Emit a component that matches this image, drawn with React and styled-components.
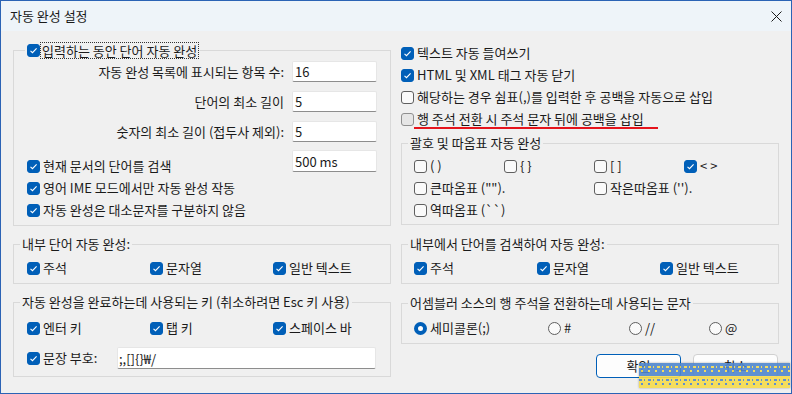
import styled, { createGlobalStyle } from "styled-components";

const GlobalStyle = createGlobalStyle`
  html, body {
    margin: 0;
    padding: 0;
    background: #f0f0f0;
  }
  body {
    font-family: "Noto Sans CJK KR", "Noto Sans", sans-serif;
    font-size: 13px;
    color: #1a1a1a;
  }
`;

const Window = styled.div`
  position: relative;
  width: 792px;
  height: 394px;
  box-sizing: border-box;
  border: 1px solid #2b63b5;
  background: #f0f0f0;
  overflow: hidden;
`;

const TitleBar = styled.div`
  height: 30px;
  background: #eef4f9;
  display: flex;
  align-items: center;
  justify-content: space-between;
  padding: 0 9px 0 9px;
  line-height: 16px;
`;

const Body = styled.div`
  display: grid;
  grid-template-columns: 378px 378px;
  column-gap: 10px;
  padding-left: 12px;
`;

const Column = styled.div`
  display: flex;
  flex-direction: column;
`;

const Group = styled.div`
  border: 1px solid #d9d9d9;
  margin-top: ${(p) => p.$top}px;
  padding: 0 ${(p) => p.$right ?? 0}px ${(p) => p.$bottom}px ${(p) => p.$left}px;
`;

const Caption = styled.div`
  width: fit-content;
  height: 16px;
  line-height: 16px;
  margin: -9px 0 0 ${(p) => p.$indent}px;
  padding: 0 2px;
  background: #f0f0f0;
  display: flex;
  align-items: center;
  white-space: nowrap;
`;

const FocusText = styled.span`
  margin-left: 1px;
  padding: 0 1px;
  height: 15px;
  line-height: 15px;
  outline: 1px dotted #333;
  outline-offset: 0;
`;

const FormGrid = styled.div`
  display: grid;
  grid-template-columns: 1fr 85px;
  grid-auto-rows: 21px;
  column-gap: 8px;
  row-gap: 9px;
  margin-top: 3px;
  align-items: center;
`;

const FieldLabel = styled.span`
  text-align: right;
  white-space: nowrap;
`;

const Field = styled.input`
  box-sizing: border-box;
  width: ${(p) => p.$width || 85}px;
  height: ${(p) => p.$height || 21}px;
  margin: 0;
  padding: 0 0 0 ${(p) => p.$pad ?? 2}px;
  border: 1px solid #e6e6e6;
  border-bottom-color: #8d8d8d;
  border-radius: 2px;
  background: #fff;
  font: inherit;
  color: #1a1a1a;
  outline: none;
`;

const SplitRow = styled.div`
  display: flex;
  justify-content: space-between;
  align-items: flex-start;
  margin-top: ${(p) => p.$top}px;
`;

const Stack = styled.div`
  display: flex;
  flex-direction: column;
  width: ${(p) => (p.$width ? `${p.$width}px` : "auto")};
  padding-top: ${(p) => p.$top || 0}px;
  margin-top: ${(p) => p.$mt || 0}px;
`;

const Check = styled.label`
  position: relative;
  display: flex;
  align-items: center;
  gap: 3px;
  height: 22px;
  line-height: 16px;
  white-space: nowrap;
  grid-column: ${(p) => p.$col || "auto"};
`;

const Box = styled.span`
  flex: none;
  box-sizing: border-box;
  width: 13px;
  height: 13px;
  border-radius: 3px;
  border: 1px solid ${(p) => (p.$on ? "#005fb8" : p.$dim ? "#8f8f8f" : "#5f5f5f")};
  background: ${(p) => (p.$on ? "#005fb8" : p.$dim ? "#e6e6e6" : "#fafafa")};
  display: flex;
  align-items: center;
  justify-content: center;
`;

const Dot = styled.span`
  flex: none;
  box-sizing: border-box;
  width: 13px;
  height: 13px;
  border-radius: 50%;
  border: ${(p) => (p.$on ? "4px solid #005fb8" : "1px solid #5f5f5f")};
  background: ${(p) => (p.$on ? "#fff" : "#fafafa")};
`;

const Mark = styled.span`
  position: absolute;
  left: 13px;
  width: 244px;
  bottom: 1px;
  height: 2px;
  background: #e5141c;
`;

const Cols = styled.div`
  display: grid;
  grid-template-columns: ${(p) => p.$cols};
  grid-auto-rows: 22px;
  margin-top: ${(p) => p.$top}px;
`;

const Punct = styled.div`
  display: flex;
  align-items: center;
  margin-top: 8px;
  height: 22px;
`;

const ButtonRow = styled.div`
  display: flex;
  justify-content: flex-end;
  gap: 12px;
  margin-top: 10px;
  padding-right: 1px;
`;

const Button = styled.button`
  box-sizing: border-box;
  width: 85px;
  height: 24px;
  margin: 0;
  padding: 0;
  border-radius: 4px;
  border: 1px solid ${(p) => (p.$primary ? "#005fb8" : "#d0d0d0")};
  box-shadow: ${(p) => (p.$primary ? "inset 0 0 0 1px #ffffff" : "none")};
  background: #fdfdfd;
  font: inherit;
  line-height: 16px;
  color: #1a1a1a;
`;

const Watermark = styled.div`
  position: absolute;
  left: 638px;
  top: 362px;
  width: 151px;
  height: 25px;
  display: flex;
  flex-direction: column;
  box-shadow: 0 0 2px rgba(0, 0, 0, 0.35);
  opacity: 0.9;
`;

const Band = styled.div`
  flex: 1;
  background-color: ${(p) => p.$bg};
  background-image: repeating-linear-gradient(
      90deg,
      ${(p) => p.$ink} 0 3px,
      transparent 3px 5px,
      ${(p) => p.$ink} 5px 6px,
      transparent 6px 9px
    ),
    repeating-linear-gradient(
      90deg,
      transparent 0 2px,
      ${(p) => p.$ink} 2px 4px,
      transparent 4px 7px
    );
  background-size: 100% 2px, 100% 2px;
  background-repeat: repeat-x, repeat-x;
  background-position: 0 3px, 0 7px;
`;

const Tick = () => (
  <svg width="9" height="9" viewBox="0 0 9 9">
    <path d="M1.5 4.8 L3.5 6.7 L7.6 2.3" fill="none" stroke="#fff" strokeWidth="1.1" />
  </svg>
);

const CheckBox = ({ on, dim, col, children }) => (
  <Check $col={col}>
    <Box $on={on} $dim={dim}>{on && <Tick />}</Box>
    {children}
  </Check>
);

const Radio = ({ on, children }) => (
  <Check>
    <Dot $on={on} />
    {children}
  </Check>
);

export default function App() {
  return (
    <>
      <GlobalStyle />
      <Window>
        <TitleBar>
          <span>자동 완성 설정</span>
          <svg width="11" height="11" viewBox="0 0 11 11">
            <path d="M0.5 0.5 L10.5 10.5 M10.5 0.5 L0.5 10.5" stroke="#1b1b1b" strokeWidth="1" />
          </svg>
        </TitleBar>
        <Body>
          <Column>
            <Group $top={19} $left={13} $right={13} $bottom={4}>
              <Caption $indent={-2}>
                <Box $on>
                  <Tick />
                </Box>
                <FocusText>입력하는 동안 단어 자동 완성</FocusText>
              </Caption>
              <FormGrid>
                <FieldLabel>자동 완성 목록에 표시되는 항목 수:</FieldLabel>
                <Field defaultValue="16" />
                <FieldLabel>단어의 최소 길이</FieldLabel>
                <Field defaultValue="5" />
                <FieldLabel>숫자의 최소 길이 (접두사 제외):</FieldLabel>
                <Field defaultValue="5" />
              </FormGrid>
              <SplitRow $top={8}>
                <Stack $top={5}>
                  <CheckBox on>현재 문서의 단어를 검색</CheckBox>
                  <CheckBox on>영어 IME 모드에서만 자동 완성 작동</CheckBox>
                  <CheckBox on>자동 완성은 대소문자를 구분하지 않음</CheckBox>
                </Stack>
                <Field defaultValue="500 ms" $height={22} />
              </SplitRow>
            </Group>

            <Group $top={18} $left={13} $bottom={4}>
              <Caption $indent={-7}>내부 단어 자동 완성:</Caption>
              <Cols $cols="123px 123px 123px" $top={5}>
                <CheckBox on>주석</CheckBox>
                <CheckBox on>문자열</CheckBox>
                <CheckBox on>일반 텍스트</CheckBox>
              </Cols>
            </Group>

            <Group $top={18} $left={13} $right={13} $bottom={7}>
              <Caption $indent={-7}>자동 완성을 완료하는데 사용되는 키 (취소하려면 Esc 키 사용)</Caption>
              <Cols $cols="123px 123px 123px" $top={7}>
                <CheckBox on>엔터 키</CheckBox>
                <CheckBox on>탭 키</CheckBox>
                <CheckBox on>스페이스 바</CheckBox>
              </Cols>
              <Punct>
                <Stack $width={90}>
                  <CheckBox on>문장 부호:</CheckBox>
                </Stack>
                <Field defaultValue=";,[]{}₩/" $width={259} $height={22} $pad={1} />
              </Punct>
            </Group>
          </Column>

          <Column>
            <Stack $mt={11}>
              <CheckBox on>텍스트 자동 들여쓰기</CheckBox>
              <CheckBox on>HTML 및 XML 태그 자동 닫기</CheckBox>
              <CheckBox>해당하는 경우 쉼표(,)를 입력한 후 공백을 자동으로 삽입</CheckBox>
              <CheckBox dim>
                행 주석 전환 시 주석 문자 뒤에 공백을 삽입
                <Mark />
              </CheckBox>
            </Stack>

            <Group $top={13} $left={12} $bottom={3}>
              <Caption $indent={-6}>괄호 및 따옴표 자동 완성</Caption>
              <Cols $cols="90px 90px 90px 90px" $top={4}>
                <CheckBox>( )</CheckBox>
                <CheckBox>{"{ }"}</CheckBox>
                <CheckBox>[ ]</CheckBox>
                <CheckBox on>{"< >"}</CheckBox>
                <CheckBox col="1 / 3">큰따옴표 ("").</CheckBox>
                <CheckBox col="3 / 5">작은따옴표 ('').</CheckBox>
                <CheckBox col="1 / 3">역따옴표 (``)</CheckBox>
              </Cols>
            </Group>

            <Group $top={19} $left={12} $bottom={4}>
              <Caption $indent={-6}>내부에서 단어를 검색하여 자동 완성:</Caption>
              <Cols $cols="123px 123px 123px" $top={5}>
                <CheckBox on>주석</CheckBox>
                <CheckBox on>문자열</CheckBox>
                <CheckBox on>일반 텍스트</CheckBox>
              </Cols>
            </Group>

            <Group $top={19} $left={12} $bottom={4}>
              <Caption $indent={-6}>어셈블러 소스의 행 주석을 전환하는데 사용되는 문자</Caption>
              <Cols $cols="134px 81px 80px auto" $top={6}>
                <Radio on>세미콜론(;)</Radio>
                <Radio>#</Radio>
                <Radio>//</Radio>
                <Radio>@</Radio>
              </Cols>
            </Group>

            <ButtonRow>
              <Button $primary>확인</Button>
              <Button>취소</Button>
            </ButtonRow>
          </Column>
        </Body>
        <Watermark>
          <Band $bg="#4f86cd" $ink="#f3d94e" />
          <Band $bg="#f6db4d" $ink="#4f86cd" />
        </Watermark>
      </Window>
    </>
  );
}
